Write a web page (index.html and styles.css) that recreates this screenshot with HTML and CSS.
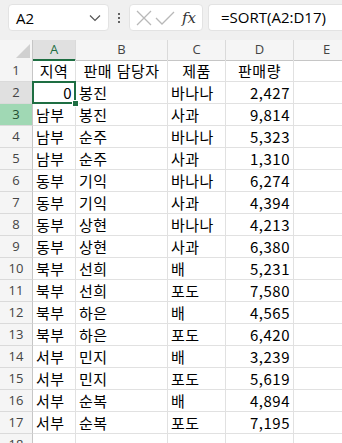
FILE: index.html
```html
<!DOCTYPE html>
<html lang="ko">
<head>
  <meta charset="UTF-8">
  <title>SORT</title>
  <link rel="stylesheet" href="styles.css">
</head>
<body>
  <!-- formula bar -->
  <div class="toolbar">
    <div class="namebox">
      <span>A2</span>
      <svg class="chev" width="12" height="8" viewBox="0 0 12 8"><path d="M1 1.5 L6 6.5 L11 1.5" fill="none" stroke="#555" stroke-width="1.2"/></svg>
    </div>
    <div class="dots"><i></i><i></i><i></i></div>
    <div class="fxbox">
      <svg width="20" height="20" viewBox="0 0 20 20"><path d="M3 3 L17 17 M17 3 L3 17" stroke="#b8b8b8" stroke-width="1.3" fill="none"/></svg>
      <svg width="22" height="20" viewBox="0 0 22 20"><path d="M2 10 L8 16 L20 4" stroke="#b8b8b8" stroke-width="1.3" fill="none"/></svg>
      <span class="fx">fx</span>
    </div>
    <div class="formula">=SORT(A2:D17)</div>
  </div>

  <!-- sheet -->
  <div class="sheet">
    <div class="row colhead">
      <div class="corner"><svg width="14" height="14" viewBox="0 0 14 14"><path d="M14 0 L14 14 L0 14 Z" fill="#d0d0d0"/></svg></div>
      <div class="active-col">A</div><div>B</div><div>C</div><div>D</div><div>E</div>
    </div>
    <div class="row"><div class="rh">1</div><div class="c">지역</div><div class="c">판매 담당자</div><div class="c">제품</div><div class="c">판매량</div><div></div></div>
    <div class="row"><div class="rh sel-row">2</div><div class="r sel">0</div><div>봉진</div><div>바나나</div><div class="r">2,427</div><div></div></div>
    <div class="row"><div class="rh spill">3</div><div>남부</div><div>봉진</div><div>사과</div><div class="r">9,814</div><div></div></div>
    <div class="row"><div class="rh">4</div><div>남부</div><div>순주</div><div>바나나</div><div class="r">5,323</div><div></div></div>
    <div class="row"><div class="rh">5</div><div>남부</div><div>순주</div><div>사과</div><div class="r">1,310</div><div></div></div>
    <div class="row"><div class="rh">6</div><div>동부</div><div>기익</div><div>바나나</div><div class="r">6,274</div><div></div></div>
    <div class="row"><div class="rh">7</div><div>동부</div><div>기익</div><div>사과</div><div class="r">4,394</div><div></div></div>
    <div class="row"><div class="rh">8</div><div>동부</div><div>상현</div><div>바나나</div><div class="r">4,213</div><div></div></div>
    <div class="row"><div class="rh">9</div><div>동부</div><div>상현</div><div>사과</div><div class="r">6,380</div><div></div></div>
    <div class="row"><div class="rh">10</div><div>북부</div><div>선희</div><div>배</div><div class="r">5,231</div><div></div></div>
    <div class="row"><div class="rh">11</div><div>북부</div><div>선희</div><div>포도</div><div class="r">7,580</div><div></div></div>
    <div class="row"><div class="rh">12</div><div>북부</div><div>하은</div><div>배</div><div class="r">4,565</div><div></div></div>
    <div class="row"><div class="rh">13</div><div>북부</div><div>하은</div><div>포도</div><div class="r">6,420</div><div></div></div>
    <div class="row"><div class="rh">14</div><div>서부</div><div>민지</div><div>배</div><div class="r">3,239</div><div></div></div>
    <div class="row"><div class="rh">15</div><div>서부</div><div>민지</div><div>포도</div><div class="r">5,619</div><div></div></div>
    <div class="row"><div class="rh">16</div><div>서부</div><div>순복</div><div>배</div><div class="r">4,894</div><div></div></div>
    <div class="row"><div class="rh">17</div><div>서부</div><div>순복</div><div>포도</div><div class="r">7,195</div><div></div></div>
    <div class="row"><div class="rh">18</div><div></div><div></div><div></div><div></div><div></div></div>
  </div>
</body>
</html>
```

FILE: styles.css
```css
body {
  margin: 0;
  width: 342px;
  height: 443px;
  overflow: hidden;
  background: #fff;
  font-family: "Noto Sans CJK KR", sans-serif;
  color: #000;
}
.toolbar {
  height: 40px;
  background: #f0f0f0;
  display: flex;
  align-items: flex-start;
  padding-top: 4px;
  box-sizing: border-box;
  white-space: nowrap;
  overflow: hidden;
}
.namebox {
  margin-left: 8px;
  width: 101px;
  height: 27px;
  box-sizing: border-box;
  background: #fff;
  border: 1px solid #e3e3e3;
  border-radius: 4px;
  display: flex;
  align-items: center;
  justify-content: space-between;
  padding: 0 7px 0 7px;
  font-family: "Open Sans", sans-serif;
  font-size: 15px;
}
.dots {
  width: 20px;
  height: 27px;
  display: flex;
  flex-direction: column;
  align-items: center;
  justify-content: center;
  gap: 2px;
}
.dots i {
  width: 2px;
  height: 2px;
  background: #333;
  border-radius: 1px;
}
.fxbox {
  width: 74px;
  height: 27px;
  box-sizing: border-box;
  background: #fff;
  border: 1px solid #e3e3e3;
  border-radius: 4px;
  display: flex;
  align-items: center;
  padding-left: 4px;
}
.fx {
  margin-left: 6px;
  font-family: "DejaVu Serif", serif;
  font-style: italic;
  font-size: 15px;
  color: #333;
}
.formula {
  margin-left: 5px;
  flex: 1;
  height: 27px;
  box-sizing: border-box;
  background: #fff;
  border: 1px solid #e3e3e3;
  border-right: none;
  border-radius: 4px 0 0 4px;
  padding-left: 12px;
  line-height: 25px;
  font-family: "Open Sans", sans-serif;
  font-size: 15px;
}
.sheet {
  width: 342px;
  height: 403px;
  overflow: hidden;
}
.row {
  display: grid;
  grid-template-columns: 33px 43px 92px 58px 68px 66px;
  height: 22px;
}
.row > div {
  box-sizing: border-box;
  border-right: 1px solid #e1e1e1;
  border-bottom: 1px solid #e1e1e1;
  font-size: 15px;
  line-height: 21px;
  letter-spacing: 0.5px;
  padding: 0 3px;
  white-space: nowrap;
  position: relative;
}
.colhead {
  height: 20px;
}
.colhead > div {
  background: #f5f5f5;
  border-bottom: 1px solid #c6c6c6;
  border-right: 1px solid #dadada;
  text-align: center;
  font-family: "Open Sans", sans-serif;
  font-size: 13px;
  line-height: 19px;
  letter-spacing: 0;
  color: #444;
}
.colhead .corner {
  border-right: 1px solid #c6c6c6;
  display: flex;
  align-items: flex-end;
  justify-content: flex-end;
  padding: 0 2px 2px 0;
}
.colhead .active-col {
  background: #e0e0e0;
  border-bottom: 2px solid #1e6e42;
  color: #1e6e42;
}
.row .rh {
  background: #f5f5f5;
  border-right: 1px solid #c6c6c6;
  border-bottom: 1px solid #dadada;
  text-align: center;
  font-family: "Open Sans", sans-serif;
  font-size: 13px;
  letter-spacing: 0;
  color: #444;
}
.row .sel-row {
  background: #e0e0e0;
}
.row .spill {
  background: #a0d8b4;
  color: #1e4e32;
}
.row .c {
  text-align: center;
}
.row .r {
  text-align: right;
}
.sel::after {
  content: "";
  position: absolute;
  left: -1px;
  top: -1px;
  right: -1px;
  bottom: -1px;
  border: 2px solid #1e6e42;
}
.sel::before {
  content: "";
  position: absolute;
  right: -4px;
  bottom: -4px;
  width: 5px;
  height: 5px;
  background: #1e6e42;
  border: 1px solid #fff;
  z-index: 1;
}
```
